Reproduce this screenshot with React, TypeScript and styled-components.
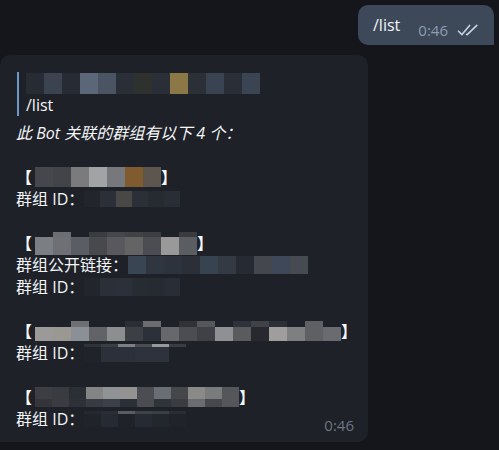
import React from "react";
import styled, { createGlobalStyle } from "styled-components";

const GlobalStyle = createGlobalStyle`
  html, body {
    margin: 0;
    background: #14161b;
  }
  body {
    font-family: "Open Sans", "Noto Sans CJK SC", sans-serif;
    color: #f5f6f8;
  }
`;

type Row = { h: number; cells: string[] };

const quoteName: Row[] = [
  {
    h: 21,
    cells: ["#272b33", "#3b4350", "#272b33", "#5b6779", "#4b5463", "#2a2e36", "#2f312e", "#2a2e36", "#8c7846", "#2b2f38", "#3a4351", "#2a2e36", "#3b4452"],
  },
];

const title1: Row[] = [
  { h: 20, cells: ["#46474c", "#424448", "#7b7b7d", "#a2a3a4", "#76787b", "#7f5b2e", "#5c564f"] },
];
const id1: Row[] = [{ h: 16, cells: ["#22252b", "#2a2f38", "#4a4846", "#2a2f38", "#262a31", "#292d35"] }];

const title2: Row[] = [
  { h: 5, cells: ["", "#6c6e73", "", "#3a3c40", "#45474b", "#404246", "#3c3e42", "", "#3a3b3f"] },
  { h: 18, cells: ["#7b7e83", "#6e7075", "#5a5d63", "#47494d", "#59595d", "#646464", "#4b4d52", "#999999", "#5c5d61"] },
];
const link2: Row[] = [
  { h: 18, cells: ["#3a4554", "#303640", "#2d333c", "#2b3038", "#384350", "#333a44", "#262b33", "#44474e", "#3e4858", "#464b52"] },
];
const id2: Row[] = [{ h: 18, cells: ["#22252b", "#2a2f38", "#2b303a", "#272b32", "#262a31", "#292d35"] }];

const title3: Row[] = [
  { h: 6, cells: ["", "", "#6e6f72", "", "", "#2b2e34", "#6b6c6e", "", "#303238", "#55575b", "", "#2f323a", "#414247", "#2c2f36", "", "#5f6064", ""] },
  { h: 14, cells: ["#9c9a99", "#9b9893", "#8b9097", "#626366", "#8d8e90", "#3c3f44", "#2c3038", "#66686b", "#4b4d52", "#3f4146", "#8e9093", "#5b5b5d", "#27292f", "#a09e9d", "#7e7f81", "#5f6064", "#6a6b6e"] },
];
const id3: Row[] = [
  { h: 3, cells: ["#2f3238", "#3a3d43", "#7f8083", "#4a4c50", "#9a9a9a", "#3a3d43"] },
  { h: 15, cells: ["#202329", "#2b303a", "#2b303a", "#2d323c", "#2d323c", ""] },
];

const title4: Row[] = [
  { h: 12, cells: ["#3c3e44", "#393b40", "#2b2e34", "#838486", "#909396", "#949391", "#4b4d53", "#6a6d73", "#45474b", "#8a8a89", "#7a7b7d", "#55565a"] },
  { h: 8, cells: ["#33353b", "#3a3c42", "#2e3137", "#383b41", "#3c4048", "#2b3038", "#4a4c51", "#2f333a", "#3a3c41", "#6b6c6f", "#46484c", "#55565a"] },
];
const id4: Row[] = [
  { h: 3, cells: ["#25282e", "#2a2d33", "#5a5c60", "#3f4247", "#3a3d43", "#2a2d33"] },
  { h: 13, cells: ["#202329", "#262b33", "#1f2228", "#262b33", "#22262d", "#202329"] },
];

function Mosaic({ rows, w = 18 }: { rows: Row[]; w?: number }) {
  return (
    <MosaicBox>
      {rows.map((r, i) => (
        <MosaicRow key={i} $h={r.h}>
          {r.cells.map((c, j) => (
            <Cell key={j} $c={c || "transparent"} $w={w} />
          ))}
        </MosaicRow>
      ))}
    </MosaicBox>
  );
}

function Checks() {
  return (
    <svg width="24" height="14" viewBox="0 0 24 14" fill="none">
      <path d="M1.5 8.2 L5 11.6 L12.6 2.4" stroke="#c3d2e4" strokeWidth="1.6" strokeLinecap="round" strokeLinejoin="round" />
      <path d="M9.6 11.4 L10.2 11.6 L19.8 2.4" stroke="#c3d2e4" strokeWidth="1.6" strokeLinecap="round" strokeLinejoin="round" />
    </svg>
  );
}

export default function App() {
  return (
    <>
      <GlobalStyle />
      <Chat>
        <OutRow>
          <OutBubble>
            <OutText>/list</OutText>
            <Meta>
              <Time $light>0:46</Time>
              <Checks />
            </Meta>
          </OutBubble>
        </OutRow>
        <InBubble>
          <Quote>
            <Line>
              <Mosaic rows={quoteName} />
            </Line>
            <Line>/list</Line>
          </Quote>
          <Italic>此 Bot 关联的群组有以下 4 个：</Italic>
          <Line />
          <Line>
            <Bracket>【</Bracket>
            <Mosaic rows={title1} />
            <Bracket>】</Bracket>
          </Line>
          <Line>
            群组 ID：
            <Mosaic rows={id1} w={16} />
          </Line>
          <Line />
          <Line>
            <Bracket>【</Bracket>
            <Mosaic rows={title2} />
            <Bracket>】</Bracket>
          </Line>
          <Line>
            群组公开链接：
            <Mosaic rows={link2} />
          </Line>
          <Line>
            群组 ID：
            <Mosaic rows={id2} w={16} />
          </Line>
          <Line />
          <Line>
            <Bracket>【</Bracket>
            <Mosaic rows={title3} />
            <Bracket>】</Bracket>
          </Line>
          <Line>
            群组 ID：
            <Mosaic rows={id3} w={17} />
          </Line>
          <Line />
          <Line>
            <Bracket>【</Bracket>
            <Mosaic rows={title4} w={17} />
            <Bracket>】</Bracket>
          </Line>
          <LastLine>
            <span>
              群组 ID：
              <Mosaic rows={id4} w={17} />
            </span>
            <Time>0:46</Time>
          </LastLine>
        </InBubble>
      </Chat>
    </>
  );
}

const Chat = styled.div`
  width: 499px;
  height: 450px;
  overflow: hidden;
  display: flex;
  flex-direction: column;
  padding-top: 5px;
  box-sizing: border-box;
`;

const OutRow = styled.div`
  display: flex;
  justify-content: flex-end;
  padding-right: 5px;
`;

const OutBubble = styled.div`
  width: 136px;
  height: 40px;
  box-sizing: border-box;
  background: #3d4858;
  border-radius: 10px 10px 0 10px;
  display: flex;
  align-items: flex-start;
  padding: 9px 13px 0 15px;
`;

const OutText = styled.span`
  font-size: 16px;
  line-height: 22px;
  color: #f2f5f8;
`;

const Meta = styled.span`
  margin-left: auto;
  margin-top: 8px;
  display: flex;
  align-items: center;
  gap: 9px;
`;

const Time = styled.span<{ $light?: boolean }>`
  font-size: 15px;
  line-height: 16px;
  color: ${(p) => (p.$light ? "#8d9db1" : "#6c7681")};
`;

const InBubble = styled.div`
  width: 368px;
  box-sizing: border-box;
  margin-top: 10px;
  background: #1e2128;
  border-radius: 10px 10px 10px 0;
  padding: 17px 14px 12px 16px;
`;

const Quote = styled.div`
  border-left: 2px solid #6b9ac9;
  margin-left: 1px;
  padding-left: 7px;
  margin-bottom: 6px;
`;

const Line = styled.div`
  font-size: 16px;
  line-height: 22px;
  height: 22px;
  white-space: nowrap;
  display: flex;
  align-items: center;
`;

const LastLine = styled(Line)`
  justify-content: space-between;
  align-items: flex-start;
  span {
    display: flex;
    align-items: center;
  }
  ${Time} {
    margin-top: 9px;
  }
`;

const Italic = styled.div`
  font-size: 16px;
  line-height: 22px;
  font-style: italic;
`;

const Bracket = styled.span`
  font-weight: 700;
  &:first-child {
    margin-right: 3px;
  }
`;

const MosaicBox = styled.span`
  display: inline-flex;
  flex-direction: column;
`;

const MosaicRow = styled.span<{ $h: number }>`
  display: flex;
  height: ${(p) => p.$h}px;
`;

const Cell = styled.span<{ $c: string; $w: number }>`
  width: ${(p) => p.$w}px;
  height: 100%;
  background: ${(p) => p.$c};
`;
